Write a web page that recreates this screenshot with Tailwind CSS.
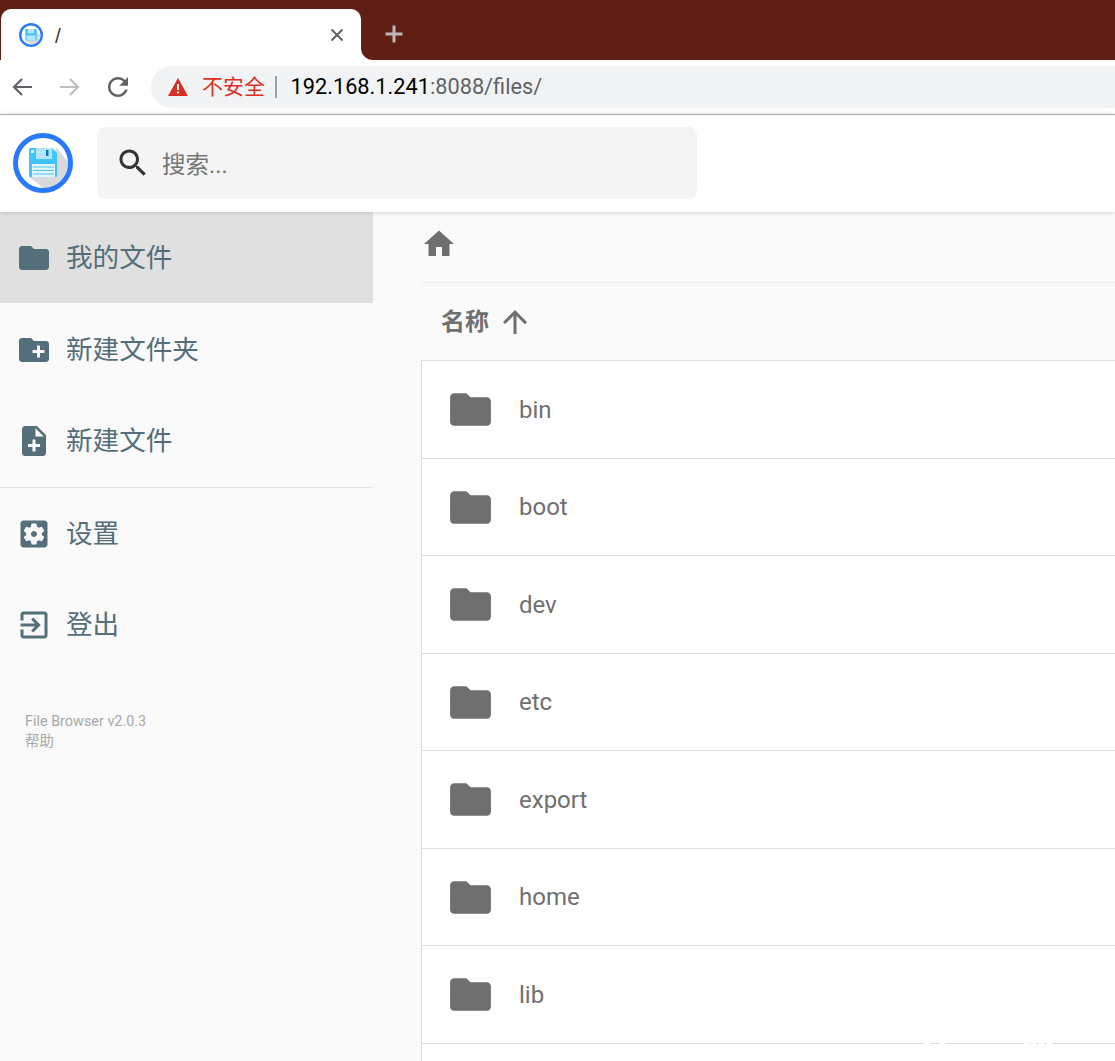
<!DOCTYPE html>
<html lang="zh-CN">
<head>
  <meta charset="UTF-8" />
  <title>/</title>
  <script src="https://cdn.jsdelivr.net/npm/@tailwindcss/browser@4"></script>
</head>
<body class="w-[1115px] h-[1061px] overflow-hidden bg-white font-['Roboto','Noto_Sans_CJK_SC',sans-serif]">

  <!-- browser tab strip -->
  <div class="bg-white">
    <div class="h-[9px] bg-[#5f1f14]"></div>
    <div class="flex h-[51px]">
      <div class="pl-px bg-[#5f1f14]">
        <div class="flex items-center w-[360px] h-full bg-white rounded-t-[10px] pl-[18px] pr-[17px]">
          <svg class="w-[24px] h-[24px]" viewBox="0 0 60 60">
            <circle cx="30" cy="30" r="27" fill="#fff" stroke="#2979ff" stroke-width="6"/>
            <path d="M40 16L53 30A24 24 0 0 1 30 54L17 44z" fill="#d9d9d9"/>
            <rect x="16" y="15" width="28" height="29" rx="1" fill="#40c4ff"/>
            <rect x="22" y="15" width="16" height="11" fill="#b3e5fc"/>
            <rect x="19" y="31" width="22" height="13" fill="#b3e5fc"/>
          </svg>
          <span class="ml-[12px] pt-[3px] text-[21px] text-[#3c4043] font-['Liberation_Sans']">/</span>
          <svg class="ml-auto w-[14px] h-[14px]" viewBox="0 0 14 14" stroke="#5f6368" stroke-width="2" fill="none">
            <path d="M1.5 1.5l11 11M12.5 1.5l-11 11"/>
          </svg>
        </div>
      </div>
      <div class="flex-1 flex items-center bg-[#5f1f14] rounded-bl-[12px] pl-[23px] pb-[1px]">
        <svg class="w-[20px] h-[20px]" viewBox="0 0 20 20" stroke="#bdb6b4" stroke-width="3" fill="none">
          <path d="M10 1.5v17M1.5 10h17"/>
        </svg>
      </div>
    </div>
  </div>

  <!-- browser toolbar -->
  <div class="flex items-center h-[55px] bg-white border-b border-[#b5b5b5]">
    <div class="flex items-center gap-[28px] pl-[12px] w-[151px]">
      <svg class="w-[20px] h-[20px]" viewBox="0 0 20 20" stroke="#5f6368" stroke-width="2.2" fill="none"><path d="M20 10H2M10 2l-8 8 8 8"/></svg>
      <svg class="w-[20px] h-[20px]" viewBox="0 0 20 20" stroke="#bdc1c6" stroke-width="2.2" fill="none"><path d="M0 10h18M10 2l8 8-8 8"/></svg>
      <svg class="w-[30px] h-[30px] -ml-[5px]" viewBox="0 0 24 24" fill="#5f6368"><path d="M17.65 6.35C16.2 4.9 14.21 4 12 4c-4.42 0-7.99 3.58-7.99 8s3.57 8 7.99 8c3.73 0 6.84-2.55 7.73-6h-2.08c-.82 2.33-3.04 4-5.65 4-3.31 0-6-2.69-6-6s2.69-6 6-6c1.66 0 3.14.69 4.22 1.78L13 11h7V4l-2.35 2.35z"/></svg>
    </div>
    <div class="flex-1 flex items-center h-[42px] bg-[#f1f3f4] rounded-l-full pl-[17px]">
      <svg class="w-[20px] h-[18px]" viewBox="0 0 20 18" fill="#d93025"><path d="M10 0L20 18H0zM9 6v6h2V6zM9 13.5v2h2v-2z" fill-rule="evenodd"/></svg>
      <span class="ml-[14px] text-[21px] leading-none text-[#d93025]">不安全</span>
      <span class="ml-[10px] w-[1.5px] h-[22px] bg-[#9aa0a6]"></span>
      <span class="ml-[14px] text-[21.75px] leading-none text-black">192.168.1.241<span class="text-[#5f6368]">:8088/files/</span></span>
    </div>
  </div>

  <!-- app header -->
  <div class="relative z-10 flex items-center h-[97px] bg-white shadow-[0_0_5px_rgba(0,0,0,0.2)] pl-[13px] pb-[2px]">
    <svg class="w-[60px] h-[60px]" viewBox="0 0 60 60">
      <circle cx="30" cy="30" r="27.5" fill="#fff"/>
      <path d="M44 15L55 29A27 27 0 0 1 31 55.5L16 44z" fill="#d9d9d9"/>
      <circle cx="30" cy="30" r="27.5" fill="none" stroke="#2979ff" stroke-width="5"/>
      <path d="M17 15h22l5 5v23a1 1 0 0 1-1 1H17a1 1 0 0 1-1-1V16a1 1 0 0 1 1-1z" fill="#40c4ff"/>
      <rect x="23" y="15" width="16" height="11" fill="#b3e5fc"/>
      <rect x="33" y="17" width="2.5" height="6" fill="#0277bd"/>
      <rect x="18" y="17" width="3" height="3" fill="#e1f5fe"/>
      <rect x="19" y="31" width="23" height="13" fill="#e1f5fe"/>
      <path d="M20 34h21M20 37.5h21M20 41h21" stroke="#4fc3f7" stroke-width="1"/>
    </svg>
    <div class="ml-[24px] flex items-center w-[600px] h-[72px] bg-[#f4f4f4] rounded-[8px] pl-[18px]">
      <svg class="w-[36px] h-[36px]" viewBox="0 0 24 24" fill="#333"><path d="M15.5 14h-.79l-.28-.27C15.41 12.59 16 11.11 16 9.5 16 5.91 13.09 3 9.5 3S3 5.91 3 9.5 5.91 16 9.5 16c1.61 0 3.09-.59 4.23-1.57l.27.28v.79l5 4.99L20.49 19l-4.99-5zm-6 0C7.01 14 5 11.99 5 9.5S7.01 5 9.5 5 14 7.01 14 9.5 11.99 14 9.5 14z"/></svg>
      <span class="ml-[11px] pt-[6px] text-[23.5px] text-[#757575]">搜索...</span>
    </div>
  </div>

  <div class="flex h-[849px]">
    <!-- sidebar -->
    <aside class="w-[421px] shrink-0 bg-[#fafafa]">
      <div class="w-[373px] text-[#546e7a] text-[26.6px]">
        <div class="flex items-center h-[91px] bg-[#e0e0e0] pl-[16px]">
          <svg class="w-[36px] h-[36px]" viewBox="0 0 24 24" fill="#546e7a"><path d="M10 4H4c-1.1 0-1.99.9-1.99 2L2 18c0 1.1.9 2 2 2h16c1.1 0 2-.9 2-2V8c0-1.1-.9-2-2-2h-8l-2-2z"/></svg>
          <span class="ml-[14px]">我的文件</span>
        </div>
        <div class="flex items-center h-[92px] pl-[16px] pt-[2px]">
          <svg class="w-[36px] h-[36px]" viewBox="0 0 24 24" fill="#546e7a"><path d="M20 6h-8l-2-2H4c-1.11 0-1.99.89-1.99 2L2 18c0 1.11.89 2 2 2h16c1.11 0 2-.89 2-2V8c0-1.11-.89-2-2-2zm-1 8h-3v3h-2v-3h-3v-2h3V9h2v3h3v2z"/></svg>
          <span class="ml-[14px]">新建文件夹</span>
        </div>
        <div class="flex items-center h-[92px] pl-[16px]">
          <svg class="w-[36px] h-[36px]" viewBox="0 0 24 24" fill="#546e7a"><path d="M14 2H6c-1.1 0-1.99.9-1.99 2L4 20c0 1.1.89 2 1.99 2H18c1.1 0 2-.9 2-2V8l-6-6zm2 14h-3v3h-2v-3H8v-2h3v-3h2v3h3v2zm-3-7V3.5L18.5 9H13z"/></svg>
          <span class="ml-[14px]">新建文件</span>
        </div>
        <div class="border-t border-[#e5e5e5]"></div>
        <div class="flex items-center h-[92px] pl-[16px]">
          <svg class="w-[36px] h-[36px]" viewBox="0 0 24 24" fill="#546e7a"><path d="M12 10c-1.1 0-2 .9-2 2s.9 2 2 2 2-.9 2-2-.9-2-2-2zm7-7H5c-1.11 0-2 .9-2 2v14c0 1.1.89 2 2 2h14c1.11 0 2-.9 2-2V5c0-1.1-.89-2-2-2zm-1.75 9c0 .23-.02.46-.05.68l1.48 1.16c.13.11.17.3.08.45l-1.4 2.42c-.09.15-.27.21-.43.15l-1.74-.7c-.36.28-.76.51-1.18.69l-.26 1.85c-.03.17-.18.3-.35.3h-2.8c-.17 0-.32-.13-.35-.29l-.26-1.85c-.43-.18-.82-.41-1.18-.69l-1.74.7c-.16.06-.34 0-.43-.15l-1.4-2.42c-.09-.15-.05-.34.08-.45l1.48-1.16c-.03-.23-.05-.46-.05-.69 0-.23.02-.46.05-.68l-1.48-1.16c-.13-.11-.17-.3-.08-.45l1.4-2.42c.09-.15.27-.21.43-.15l1.74.7c.36-.28.76-.51 1.18-.69l.26-1.85c.03-.17.18-.3.35-.3h2.8c.17 0 .32.13.35.29l.26 1.85c.43.18.82.41 1.18.69l1.74-.7c.16-.06.34 0 .43.15l1.4 2.42c.09.15.05.34-.08.45l-1.48 1.16c.03.23.05.46.05.69z"/></svg>
          <span class="ml-[14px]">设置</span>
        </div>
        <div class="flex items-center h-[92px] pl-[16px] pb-[2px]">
          <svg class="w-[36px] h-[36px]" viewBox="0 0 24 24" fill="#546e7a"><path d="M10.09 15.59L11.5 17l5-5-5-5-1.41 1.41L12.67 11H3v2h9.67l-2.58 2.59zM19 3H5c-1.11 0-2 .9-2 2v4h2V5h14v14H5v-4H3v4c0 1.1.89 2 2 2h14c1.1 0 2-.9 2-2V5c0-1.1-.9-2-2-2z"/></svg>
          <span class="ml-[14px]">登出</span>
        </div>
        <div class="pl-[25px] pt-[40px] text-[14.4px] leading-[20px] text-[#a8a8a8]">
          <p>File Browser v2.0.3</p>
          <p>帮助</p>
        </div>
      </div>
    </aside>

    <!-- file list -->
    <main class="flex-1 bg-[#fafafa] text-[#6f6f6f]">
      <div class="flex items-center h-[71px] pb-[6px] border-b border-[#eeeeee]">
        <svg class="w-[36px] h-[36px]" viewBox="0 0 24 24" fill="#6f6f6f"><path d="M10 20v-6h4v6h5v-8h3L12 3 2 12h3v8z"/></svg>
      </div>
      <div class="flex items-center h-[78px] pl-[20px] text-[24px] font-bold border-b border-[#dedede]">
        <span>名称</span>
        <svg class="ml-[8px] w-[36px] h-[36px]" viewBox="0 0 24 24" fill="#6f6f6f"><path d="M4 12l1.41 1.41L11 7.83V20h2V7.83l5.58 5.59L20 12l-8-8-8 8z"/></svg>
      </div>
      <div class="bg-white border-l border-[#dedede] text-[24px]">
        <div class="flex items-center h-[98px] pl-[24px] border-b border-[#dedede]">
          <svg class="w-[49px] h-[49px]" viewBox="0 0 24 24" fill="#6f6f6f"><path d="M10 4H4c-1.1 0-1.99.9-1.99 2L2 18c0 1.1.9 2 2 2h16c1.1 0 2-.9 2-2V8c0-1.1-.9-2-2-2h-8l-2-2z"/></svg>
          <span class="ml-[24px]">bin</span>
        </div>
        <div class="flex items-center h-[97px] pl-[24px] border-b border-[#dedede]">
          <svg class="w-[49px] h-[49px]" viewBox="0 0 24 24" fill="#6f6f6f"><path d="M10 4H4c-1.1 0-1.99.9-1.99 2L2 18c0 1.1.9 2 2 2h16c1.1 0 2-.9 2-2V8c0-1.1-.9-2-2-2h-8l-2-2z"/></svg>
          <span class="ml-[24px]">boot</span>
        </div>
        <div class="flex items-center h-[98px] pl-[24px] border-b border-[#dedede]">
          <svg class="w-[49px] h-[49px]" viewBox="0 0 24 24" fill="#6f6f6f"><path d="M10 4H4c-1.1 0-1.99.9-1.99 2L2 18c0 1.1.9 2 2 2h16c1.1 0 2-.9 2-2V8c0-1.1-.9-2-2-2h-8l-2-2z"/></svg>
          <span class="ml-[24px]">dev</span>
        </div>
        <div class="flex items-center h-[97px] pl-[24px] border-b border-[#dedede]">
          <svg class="w-[49px] h-[49px]" viewBox="0 0 24 24" fill="#6f6f6f"><path d="M10 4H4c-1.1 0-1.99.9-1.99 2L2 18c0 1.1.9 2 2 2h16c1.1 0 2-.9 2-2V8c0-1.1-.9-2-2-2h-8l-2-2z"/></svg>
          <span class="ml-[24px]">etc</span>
        </div>
        <div class="flex items-center h-[98px] pl-[24px] border-b border-[#dedede]">
          <svg class="w-[49px] h-[49px]" viewBox="0 0 24 24" fill="#6f6f6f"><path d="M10 4H4c-1.1 0-1.99.9-1.99 2L2 18c0 1.1.9 2 2 2h16c1.1 0 2-.9 2-2V8c0-1.1-.9-2-2-2h-8l-2-2z"/></svg>
          <span class="ml-[24px]">export</span>
        </div>
        <div class="flex items-center h-[97px] pl-[24px] border-b border-[#dedede]">
          <svg class="w-[49px] h-[49px]" viewBox="0 0 24 24" fill="#6f6f6f"><path d="M10 4H4c-1.1 0-1.99.9-1.99 2L2 18c0 1.1.9 2 2 2h16c1.1 0 2-.9 2-2V8c0-1.1-.9-2-2-2h-8l-2-2z"/></svg>
          <span class="ml-[24px]">home</span>
        </div>
        <div class="relative flex items-center h-[98px] pl-[24px] border-b border-[#dedede]">
          <svg class="w-[49px] h-[49px]" viewBox="0 0 24 24" fill="#6f6f6f"><path d="M10 4H4c-1.1 0-1.99.9-1.99 2L2 18c0 1.1.9 2 2 2h16c1.1 0 2-.9 2-2V8c0-1.1-.9-2-2-2h-8l-2-2z"/></svg>
          <span class="ml-[24px]">lib</span>
          <!-- watermark specks over the row line -->
          <div class="absolute -bottom-px left-[503px] w-[5px] h-px bg-white"></div>
          <div class="absolute -bottom-px left-[518px] w-[5px] h-px bg-white"></div>
          <div class="absolute -bottom-px left-[602px] w-[5px] h-px bg-white"></div>
          <div class="absolute -bottom-px left-[609px] w-[5px] h-px bg-white"></div>
          <div class="absolute -bottom-px left-[617px] w-[5px] h-px bg-white"></div>
          <div class="absolute -bottom-px left-[625px] w-[5px] h-px bg-white"></div>
        </div>
        <div class="h-[60px]"></div>
      </div>
    </main>
  </div>
</body>
</html>
